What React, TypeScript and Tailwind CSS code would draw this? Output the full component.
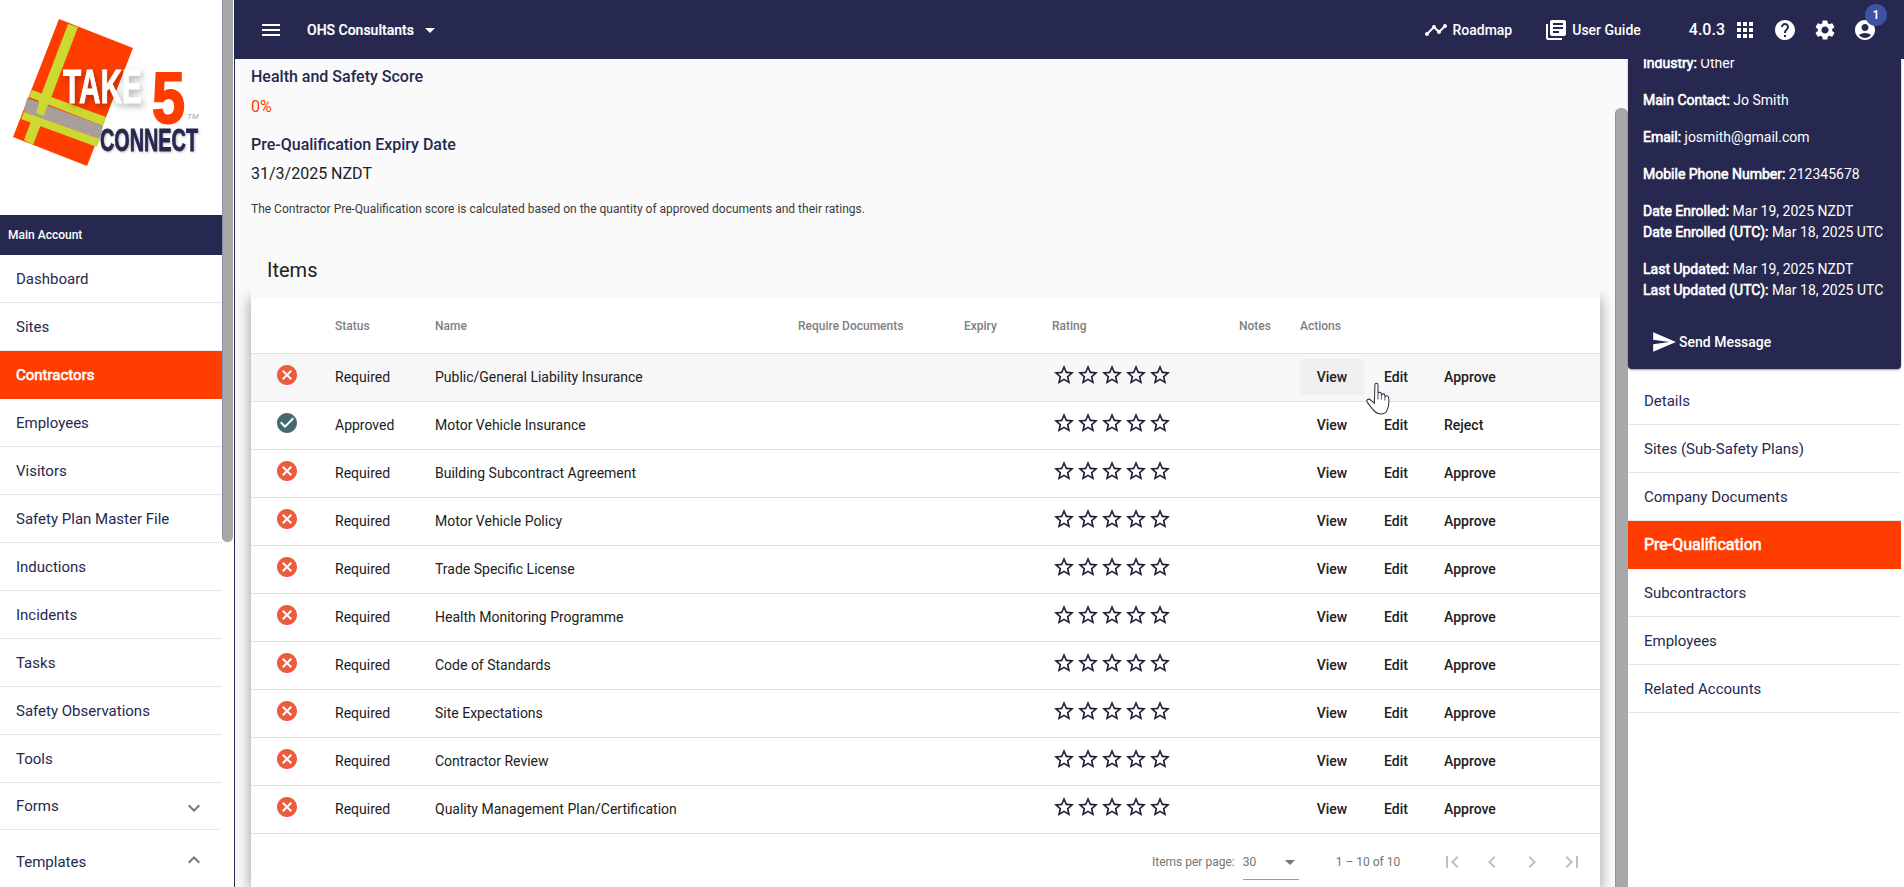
import {
  MdAccountCircle,
  MdApps,
  MdArrowDropDown,
  MdCancel,
  MdCheckCircle,
  MdChevronLeft,
  MdChevronRight,
  MdExpandLess,
  MdExpandMore,
  MdFirstPage,
  MdHelp,
  MdLastPage,
  MdLibraryBooks,
  MdMenu,
  MdSend,
  MdSettings,
  MdStarBorder,
  MdTimeline,
} from "react-icons/md";

const navItems = [
  "Dashboard",
  "Sites",
  "Contractors",
  "Employees",
  "Visitors",
  "Safety Plan Master File",
  "Inductions",
  "Incidents",
  "Tasks",
  "Safety Observations",
  "Tools",
];

const sideMenu = ["Details", "Sites (Sub-Safety Plans)", "Company Documents", "Pre-Qualification", "Subcontractors", "Employees", "Related Accounts"];

const rows = [
  ["Required", "Public/General Liability Insurance"],
  ["Approved", "Motor Vehicle Insurance"],
  ["Required", "Building Subcontract Agreement"],
  ["Required", "Motor Vehicle Policy"],
  ["Required", "Trade Specific License"],
  ["Required", "Health Monitoring Programme"],
  ["Required", "Code of Standards"],
  ["Required", "Site Expectations"],
  ["Required", "Contractor Review"],
  ["Required", "Quality Management Plan/Certification"],
];

const cols = "grid grid-cols-[84px_100px_363px_166px_88px_187px_61px_1fr] items-center";

function Logo() {
  return (
    <svg width="222" height="215" viewBox="0 0 222 215" className="block">
      <polygon points="59,19 133,48 87,166 13,137" fill="#ff3d00" />
      <polygon points="68,24 78,27 33,145 24,140" fill="#cdd933" />
      <polygon points="32,90 106,117 103,126 29,97" fill="#cdd933" />
      <polygon points="27,98 103,126 100,139 24,112" fill="#a89e9e" />
      <polygon points="24,112 100,139 97,147 21,119" fill="#cdd933" />
      <polygon points="41,97 49,100 44,116 36,113" fill="#cdd933" />
      <g style={{ fontFamily: "Liberation Sans, sans-serif", fontWeight: 700 }}>
        <text x="63" y="103" fontSize="48" textLength="79" lengthAdjust="spacingAndGlyphs" fill="#fff" stroke="#fff" strokeWidth="1" style={{ filter: "drop-shadow(2px 3px 3px rgba(0,0,0,.3))" }}>
          TAKE
        </text>
        <text x="152" y="123" fontSize="72" textLength="33" lengthAdjust="spacingAndGlyphs" fill="#ff3d00" stroke="#ff3d00" strokeWidth="2">
          5
        </text>
        <text x="187" y="119" fontSize="8" fontStyle="italic" fontWeight="400" fill="#a3a3a3">
          TM
        </text>
        <text x="100" y="151" fontSize="32" textLength="98" lengthAdjust="spacingAndGlyphs" fill="#262850" stroke="#262850" strokeWidth="0.8" style={{ filter: "drop-shadow(1px 1px 1px rgba(0,0,0,.25))" }}>
          CONNECT
        </text>
      </g>
    </svg>
  );
}

function HandCursor() {
  return (
    <svg width="25" height="33" viewBox="0 0 24 32" className="absolute left-[1366px] top-[382px] z-30">
      <path
        d="M8.5 3C8.5.5 11.5.5 11.5 3V11C12 9.5 14.5 9.5 14.8 11.5V13C15.3 11 18 11 18.2 13V14.5C18.8 12.8 21.5 13 21.8 15C22.2 18 22 24 20.5 27C19.5 30 17 31 14 31C10 31 8.5 29 6 26L1 19.5C-.2 17.5 2.5 15.5 4.5 17.5L8 20.5Z"
        fill="#fff"
        stroke="#2b3040"
        strokeWidth="1"
      />
      <path d="M11.5 11V17M14.8 13V17M18.2 14.5V18" stroke="#2b3040" strokeWidth="0.8" fill="none" />
    </svg>
  );
}

function Sidebar() {
  return (
    <aside className="flex w-[235px] shrink-0 border-r border-[#262850] bg-white">
      <div className="w-[222px] shrink-0 overflow-hidden">
        <Logo />
        <div className="flex h-10 items-center bg-[#262850] pl-2 text-xs font-medium text-white">Main Account</div>
        {navItems.map((item) =>
          item === "Contractors" ? (
            <div key={item} className="flex h-12 items-center bg-[#ff3d00] pl-4 text-[15px] text-white [-webkit-text-stroke:0.6px]">
              {item}
            </div>
          ) : (
            <div key={item} className="flex h-12 items-center border-b border-[#e5e5e5] pl-4 pt-px text-[15px] text-[#262850]">
              {item}
            </div>
          ),
        )}
        <div className="flex h-[47px] items-center justify-between rounded-br border-b border-[#e5e5e5] pl-4 pr-4 text-[15px] text-[#262850]">
          Forms
          <MdExpandMore size={24} className="mt-[3px] text-[#757575]" />
        </div>
        <div className="flex h-16 items-center justify-between pl-4 pr-4 text-[15px] text-[#262850]">
          Templates
          <MdExpandLess size={24} className="-mt-1 text-[#757575]" />
        </div>
      </div>
      <div className="w-[11px]">
        <div className="h-[542px] rounded-b-md border-l border-[#8a93a3] bg-[#a8a8a8]" />
      </div>
    </aside>
  );
}

function TopBar() {
  return (
    <header className="relative z-20 flex h-[59px] shrink-0 items-center bg-[#262850] text-white">
      <MdMenu size={24} className="ml-6" />
      <span className="ml-6 text-sm font-medium [-webkit-text-stroke:0.2px]">OHS Consultants</span>
      <MdArrowDropDown size={24} className="ml-1" />
      <MdTimeline size={24} className="ml-auto" />
      <span className="ml-1 text-sm font-medium">Roadmap</span>
      <MdLibraryBooks size={24} className="ml-8" />
      <span className="ml-1 text-sm font-medium">User Guide</span>
      <span className="ml-12 text-base font-medium">4.0.3</span>
      <MdApps size={24} className="ml-2" />
      <MdHelp size={24} className="ml-4" />
      <MdSettings size={24} className="ml-4" />
      <div className="relative ml-4 mr-[27px]">
        <MdAccountCircle size={24} />
        <span className="absolute -top-3.5 left-3 flex h-[22px] w-[22px] items-center justify-center rounded-full bg-[#3f51a5] text-xs font-semibold">1</span>
      </div>
    </header>
  );
}

function ItemsTable() {
  return (
    <div className="relative w-[1349px] bg-white shadow-[0_0_14px_rgba(0,0,0,0.4)]">
      <div className={`${cols} h-14 border-b border-[#e0e0e0] text-xs font-medium text-[#808080]`}>
        <span />
        <span>Status</span>
        <span>Name</span>
        <span>Require Documents</span>
        <span>Expiry</span>
        <span>Rating</span>
        <span>Notes</span>
        <span>Actions</span>
      </div>
      {rows.map(([status, name], i) => (
        <div key={name} className={`${cols} h-12 border-b border-[#e0e0e0] pb-px text-sm text-[#212121] ${i === 0 ? "bg-[#f7f7f7]" : ""}`}>
          <span className="-mt-1 flex pl-6">
            {status === "Approved" ? <MdCheckCircle size={24} className="text-[#44696e]" /> : <MdCancel size={24} className="text-[#ec5b3f]" />}
          </span>
          <span>{status}</span>
          <span>{name}</span>
          <span />
          <span />
          <span className="-mt-1 flex">
            {[0, 1, 2, 3, 4].map((s) => (
              <MdStarBorder key={s} size={24} className="text-[#1c2030]" />
            ))}
          </span>
          <span />
          <span className="flex items-center text-sm font-medium">
            <span className={`flex h-9 w-16 items-center justify-center rounded ${i === 0 ? "bg-[#f0f0f0]" : ""}`}>View</span>
            <span className="flex h-9 w-16 items-center justify-center">Edit</span>
            <span className="flex h-9 w-[83px] items-center pl-4">{status === "Approved" ? "Reject" : "Approve"}</span>
          </span>
        </div>
      ))}
      <div className="flex h-14 items-center whitespace-nowrap text-xs text-[#757575]">
        <span className="ml-[901px]">Items per page:</span>
        <span className="ml-2 flex h-9 w-14 items-center justify-between border-b border-[#9e9e9e]">
          30
          <MdArrowDropDown size={24} className="-mr-[3px] text-[#757575]" />
        </span>
        <span className="ml-[37px]">1 – 10 of 10</span>
        <span className="ml-8 flex text-[#c4bdbd]">
          {[MdFirstPage, MdChevronLeft, MdChevronRight, MdLastPage].map((Icon, i) => (
            <span key={i} className="flex w-10 justify-center">
              <Icon size={24} />
            </span>
          ))}
        </span>
      </div>
    </div>
  );
}

function MainContent() {
  return (
    <main className="h-full w-[1380px] shrink-0 overflow-hidden bg-[#fafafa] pl-4 pt-1.5">
      <h2 className="text-base leading-6 font-medium text-[#262850]">Health and Safety Score</h2>
      <p className="mt-1.5 text-base leading-6 text-[#ff3d00]">0%</p>
      <h2 className="mt-3.5 text-base leading-6 font-medium text-[#262850]">Pre-Qualification Expiry Date</h2>
      <p className="mt-[5px] text-base leading-6 text-[#212121]">31/3/2025 NZDT</p>
      <p className="mt-[15px] text-xs leading-4 text-[#3a3a3a]">The Contractor Pre-Qualification score is calculated based on the quantity of approved documents and their ratings.</p>
      <div className="relative z-10 mt-6 h-[57px] w-[1349px] bg-[#f8f9f9] pl-4 pt-[15px] text-xl leading-7 text-[#212121]">Items</div>
      <ItemsTable />
    </main>
  );
}

function RightPanel() {
  return (
    <aside className="h-full w-[273px] shrink-0 bg-white">
      <div className="h-[310px] overflow-hidden rounded-b bg-[#262850] pl-[15px] text-sm leading-[21px] text-white shadow-[0_1px_2px_rgba(0,0,0,0.4)]">
        <p className="-mt-1.5">
          <b className="font-normal [-webkit-text-stroke:0.6px]">Industry:</b> Other
        </p>
        <p className="mt-4">
          <b className="font-normal [-webkit-text-stroke:0.6px]">Main Contact:</b> Jo Smith
        </p>
        <p className="mt-4">
          <b className="font-normal [-webkit-text-stroke:0.6px]">Email:</b> josmith@gmail.com
        </p>
        <p className="mt-4">
          <b className="font-normal [-webkit-text-stroke:0.6px]">Mobile Phone Number:</b> 212345678
        </p>
        <p className="mt-4">
          <b className="font-normal [-webkit-text-stroke:0.6px]">Date Enrolled:</b> Mar 19, 2025 NZDT
        </p>
        <p>
          <b className="font-normal [-webkit-text-stroke:0.6px]">Date Enrolled (UTC):</b> Mar 18, 2025 UTC
        </p>
        <p className="mt-4">
          <b className="font-normal [-webkit-text-stroke:0.6px]">Last Updated:</b> Mar 19, 2025 NZDT
        </p>
        <p>
          <b className="font-normal [-webkit-text-stroke:0.6px]">Last Updated (UTC):</b> Mar 18, 2025 UTC
        </p>
        <div className="mt-7 flex items-center pl-2 font-medium">
          <MdSend size={26} className="mr-0.5" />
          Send Message
        </div>
      </div>
      <div className="pt-2">
        {sideMenu.map((item) =>
          item === "Pre-Qualification" ? (
            <div key={item} className="flex h-12 items-center bg-[#ff3d00] pl-4 text-base text-white [-webkit-text-stroke:0.6px]">
              {item}
            </div>
          ) : (
            <div key={item} className="flex h-12 items-center border-b border-[#e5e5e5] pl-4 pt-px text-[15px] text-[#262850]">
              {item}
            </div>
          ),
        )}
      </div>
    </aside>
  );
}

export default function App() {
  return (
    <div className="relative flex h-[887px] w-[1904px] overflow-hidden bg-white font-[Roboto,sans-serif]">
      <Sidebar />
      <div className="flex min-w-0 flex-1 flex-col">
        <TopBar />
        <div className="flex min-h-0 flex-1">
          <MainContent />
          <div className="h-full w-[13px] shrink-0 bg-[#fafafa]">
            <div className="mt-[49px] h-full rounded-t-md border-l border-[#8a93a3] bg-[#a8a8a8]" />
          </div>
          <RightPanel />
        </div>
      </div>
      <HandCursor />
    </div>
  );
}
